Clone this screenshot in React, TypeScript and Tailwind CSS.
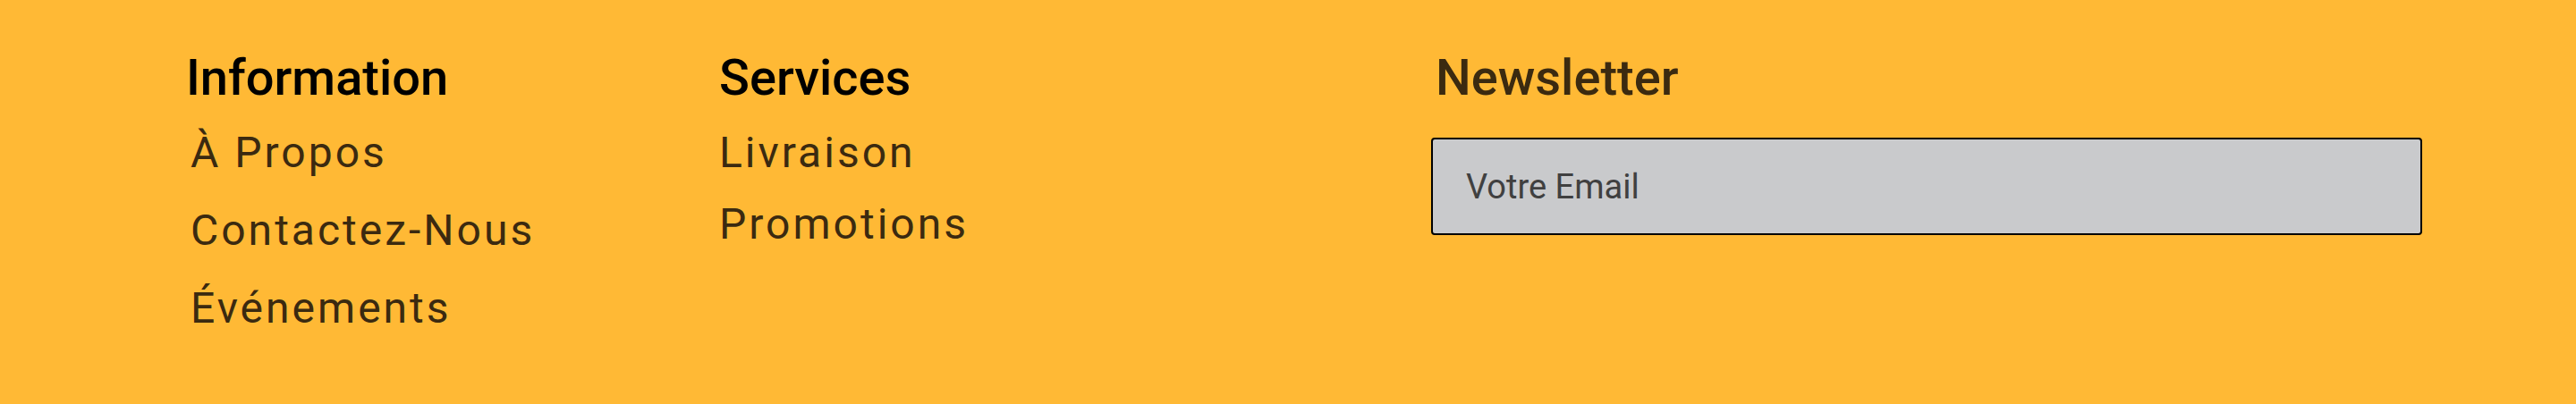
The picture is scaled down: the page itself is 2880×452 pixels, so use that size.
export default function App() {
  const info = ["À Propos", "Contactez-Nous", "Événements"]
  const services = ["Livraison", "Promotions"]

  return (
    <footer className="h-[452px] w-full bg-[#ffb935] font-['Roboto',sans-serif]">
      <div className="flex pl-[208px] pt-[54px]">
        {/* Information */}
        <div className="w-[596px] shrink-0">
          <h3 className="text-[56px] leading-[67px] font-medium text-black">Information</h3>
          <ul className="mt-[14px] flex flex-col gap-[15px] pl-[5px]">
            {info.map((item) => (
              <li key={item} className="text-[48px] leading-[72px] tracking-[3px] text-[#3b2a10]">
                {item}
              </li>
            ))}
          </ul>
        </div>

        {/* Services */}
        <div className="w-[796px] shrink-0">
          <h3 className="text-[56px] leading-[67px] font-medium text-black">Services</h3>
          <ul className="mt-[14px] flex flex-col gap-[8px]">
            {services.map((item) => (
              <li key={item} className="text-[48px] leading-[72px] tracking-[3px] text-[#3b2a10]">
                {item}
              </li>
            ))}
          </ul>
        </div>

        {/* Newsletter */}
        <div className="w-[1108px] shrink-0">
          <h3 className="pl-[5px] text-[56px] leading-[67px] font-medium text-[#3b2a10]">Newsletter</h3>
          <input
            type="email"
            placeholder="Votre Email"
            className="mt-[33px] block h-[109px] w-full rounded-[4px] border-2 border-black bg-[#c9cacc] px-[37px] text-[38px] text-[#404040] placeholder:text-[#404040] outline-none"
          />
        </div>
      </div>
    </footer>
  )
}
